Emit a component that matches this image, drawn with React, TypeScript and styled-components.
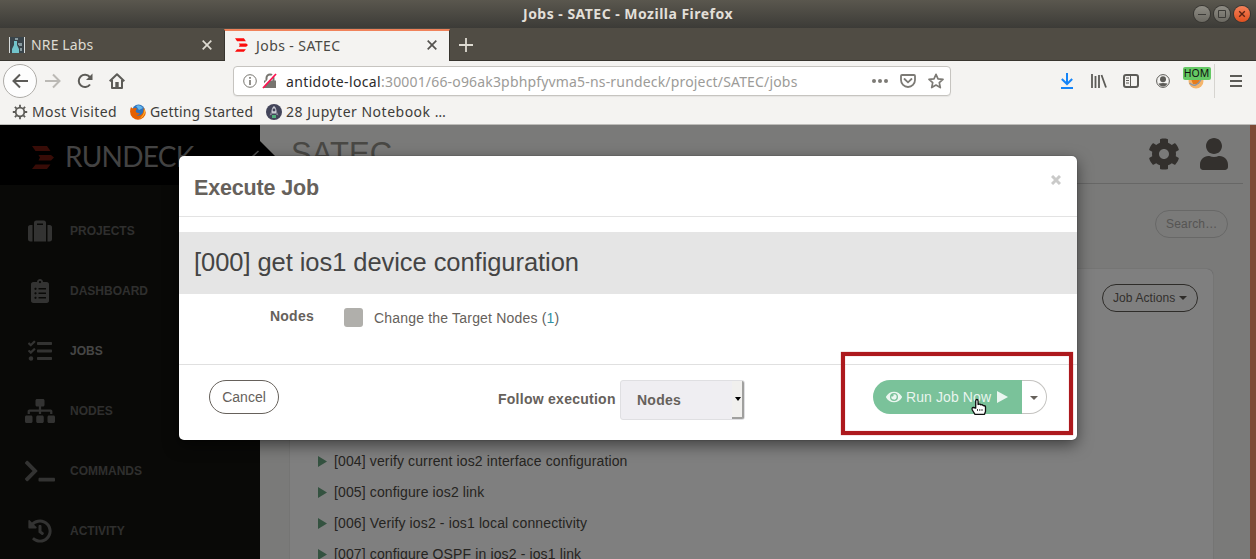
import React from "react";
import styled, { createGlobalStyle, css } from "styled-components";
import {
  FaSuitcase, FaClipboardList, FaTasks, FaSitemap, FaTerminal, FaHistory, FaCog, FaUser, FaEye,
} from "react-icons/fa";

const Global = createGlobalStyle`
  * { box-sizing: border-box; }
  html, body { margin: 0; padding: 0; }
  body { width: 1256px; height: 559px; overflow: hidden; background: #f4f3f1;
    font-family: "Liberation Sans", Arial, sans-serif; }
  svg { display: block; flex: none; }
`;

const Window = styled.div`
  position: relative;
  display: flex;
  flex-direction: column;
  width: 1256px;
  height: 559px;
  overflow: hidden;
`;

/* ---------- Browser chrome ---------- */
const chromeFont = css`font-family: "Noto Sans", "Open Sans", sans-serif;`;

const TitleBar = styled.header`
  ${chromeFont}
  display: grid;
  grid-template-columns: 1fr auto 1fr;
  align-items: center;
  flex: none;
  height: 28px;
  padding-right: 6px;
  background: linear-gradient(#5a574e, #3c3b37);
`;
const WindowTitle = styled.div`
  grid-column: 2;
  padding-left: 6px;
  margin-top: -1px;
  color: #e2dfd8;
  font-size: 14px;
  font-weight: 700;
  letter-spacing: 0.48px;
  white-space: nowrap;
`;
const WindowButtons = styled.div`
  display: flex;
  justify-content: flex-end;
  gap: 4px;
`;
const WindowButton = styled.span<{ $close?: boolean }>`
  display: flex;
  align-items: center;
  justify-content: center;
  width: 16px;
  height: 16px;
  border-radius: 50%;
  background: ${(p) => (p.$close ? "linear-gradient(#f58159, #e0501f)" : "linear-gradient(#8e8c84, #6b6962)")};
  box-shadow: 0 0 0 1px #373632;
`;

const TabStrip = styled.div`
  ${chromeFont}
  display: flex;
  flex: none;
  height: 33px;
  background: #504c44;
  box-shadow: inset 0 -1px #38352f;
`;
const Tab = styled.div<{ $active?: boolean }>`
  display: flex;
  align-items: center;
  width: ${(p) => (p.$active ? 226 : 224)}px;
  padding: ${(p) => (p.$active ? "0 12px 2px 10px" : "0 12px 0 9px")};
  border-top: ${(p) => (p.$active ? "2px solid #f0825a" : "0")};
  border-left: ${(p) => (p.$active ? "1px solid #38352f" : "0")};
  border-right: ${(p) => (p.$active ? "1px solid #38352f" : "0")};
  margin-top: ${(p) => (p.$active ? 1 : 0)}px;
  background: ${(p) => (p.$active ? "#f4f3f1" : "transparent")};
  color: ${(p) => (p.$active ? "#4a4843" : "#dedbd2")};
  font-size: 14px;
`;
const TabTitle = styled.span<{ $gap: number; $track: number }>`
  flex: 1;
  margin-left: ${(p) => p.$gap}px;
  letter-spacing: ${(p) => p.$track}px;
  white-space: nowrap;
`;
const NewTab = styled.div`
  display: flex;
  align-items: center;
  padding-left: 9px;
`;

const NavBar = styled.div`
  display: flex;
  align-items: center;
  flex: none;
  height: 40px;
  padding-left: 3px;
  background: #f4f3f1;
`;
const BackButton = styled.div`
  display: flex;
  align-items: center;
  justify-content: center;
  flex: none;
  width: 34px;
  height: 34px;
  border: 1px solid #aeaca8;
  border-radius: 50%;
  background: #fdfdfd;
`;
const NavIcons = styled.div`
  display: flex;
  align-items: center;
  flex: none;
  gap: 16px;
  width: 196px;
  padding-left: 8px;
`;
const AddressBar = styled.div`
  ${chromeFont}
  display: flex;
  align-items: center;
  flex: none;
  width: 718px;
  height: 30px;
  padding: 0 6px 0 9px;
  border: 1px solid #c6c4c0;
  border-radius: 4px;
  background: #fff;
  box-shadow: 0 1px 1px rgba(0, 0, 0, 0.06);
`;
const Url = styled.div`
  flex: 1;
  margin-left: 9px;
  color: #9c9b98;
  font-size: 14px;
  letter-spacing: 0.17px;
  white-space: nowrap;
  b { color: #2b2b2b; font-weight: 400; letter-spacing: 0.36px; }
`;
const AddressIcons = styled.div`
  display: flex;
  align-items: center;
  gap: 12px;
`;
const ToolIcons = styled.div`
  display: grid;
  grid-template-columns: 32px 32px 32px 32px 35px 1px 41px;
  align-items: center;
  justify-items: center;
  height: 34px;
  padding-left: 100px;
`;
const Extension = styled.div`
  position: relative;
  width: 28px;
  height: 34px;
  padding: 9px 0 0 5px;
`;
const ExtensionBadge = styled.span`
  ${chromeFont}
  position: absolute;
  left: 0;
  top: 3px;
  width: 28px;
  height: 13px;
  border-radius: 2px;
  background: #64c864;
  color: #111;
  font-size: 10.5px;
  line-height: 13px;
  text-align: center;
`;
const Divider = styled.span`
  width: 1px;
  height: 34px;
  background: #d6d4d0;
`;

const Bookmarks = styled.div`
  ${chromeFont}
  display: flex;
  flex: none;
  height: 24px;
  padding: 0 0 2px 12px;
  border-bottom: 1px solid #bdbcb9;
  background: #f4f3f1;
  color: #3e3d3a;
  font-size: 14px;
`;
const Bookmark = styled.div<{ $width: number; $track: number }>`
  display: flex;
  align-items: center;
  gap: 4px;
  width: ${(p) => p.$width}px;
  letter-spacing: ${(p) => p.$track}px;
  white-space: nowrap;
`;

/* ---------- Page behind the dialog ---------- */
const Page = styled.div`
  position: relative;
  display: flex;
  flex: 1;
  min-height: 0;
  overflow: hidden;
  background: #f4f4f3;
`;
const Shade = styled.div`
  position: absolute;
  inset: 0;
  background: rgba(0, 0, 0, 0.5);
`;
const Sidebar = styled.nav`
  display: flex;
  flex-direction: column;
  flex: none;
  width: 260px;
  background: #13130f;
`;
const Brand = styled.div`
  position: relative;
  display: flex;
  align-items: center;
  gap: 11px;
  flex: none;
  height: 60px;
  padding: 4px 0 0 32px;
  background: #000;
`;
const BrandName = styled.span`
  margin-top: -3px;
  color: #868686;
  font-family: Lato, sans-serif;
  font-size: 28px;
  letter-spacing: -0.75px;
  white-space: nowrap;
`;
const BrandNotch = styled.span`
  position: absolute;
  left: 260px;
  top: 16px;
  width: 30px;
  height: 30px;
  background: #000;
  clip-path: polygon(0 0, 100% 100%, 0 100%);
`;
const Collapse = styled.span`
  position: absolute;
  left: 250px;
  top: 25px;
`;
const NavItem = styled.div<{ $active?: boolean }>`
  display: flex;
  align-items: center;
  flex: none;
  gap: 15px;
  height: 60px;
  padding-left: 25px;
  color: ${(p) => (p.$active ? "#8c8c8a" : "#5e5e5c")};
  font-size: 12px;
  font-weight: 700;
  &:nth-child(2) { margin-top: 16px; }
`;
const NavGlyph = styled.span<{ $wide?: boolean }>`
  display: flex;
  justify-content: center;
  width: 30px;
  color: #666664;
  svg { width: ${(p) => (p.$wide ? 30 : 24)}px; height: 24px; }
`;

const Main = styled.main`
  display: flex;
  flex-direction: column;
  width: 983px;
  margin-right: 7px;
`;
const PageHeader = styled.div`
  display: flex;
  flex: none;
  justify-content: space-between;
  height: 59px;
  padding: 0 13px 0 31px;
  border-bottom: 1px solid #cfcfcd;
  color: #929089;
`;
const ProjectName = styled.h1`
  margin: 11px 0 0;
  font-size: 31px;
  font-weight: 400;
  line-height: 36px;
`;
const HeaderActions = styled.div`
  display: flex;
  align-items: center;
  gap: 18px;
  color: #66615b;
`;
const SearchRow = styled.div`
  display: flex;
  justify-content: flex-end;
  flex: none;
  padding: 26px 15px 31px 0;
`;
const SearchPill = styled.div`
  width: 73px;
  height: 28px;
  padding-left: 10px;
  border: 1px solid #d0d0ce;
  border-radius: 14px;
  color: #acaaa6;
  font-size: 12px;
  letter-spacing: 0.2px;
  line-height: 26px;
`;
const Card = styled.section`
  flex: 1;
  width: 923px;
  margin-left: 30px;
  padding: 15px 15px 0 28px;
  border-radius: 6px 6px 0 0;
  background: #fff;
  box-shadow: 0 0 1px rgba(0, 0, 0, 0.4);
`;
const JobActions = styled.div`
  display: flex;
  align-items: center;
  gap: 4px;
  width: 96px;
  height: 28px;
  margin: 0 0 133px auto;
  padding-left: 10px;
  border: 1px solid #5c5852;
  border-radius: 14px;
  color: #66615b;
  font-size: 12px;
  letter-spacing: 0.1px;
  white-space: nowrap;
`;
const Caret = styled.span<{ $color: string }>`
  width: 0;
  height: 0;
  border: 4px solid transparent;
  border-top-color: ${(p) => p.$color};
  border-bottom: 0;
`;
const JobRow = styled.div`
  display: flex;
  align-items: center;
  gap: 6px;
  height: 31px;
  color: #4c4943;
  font-size: 14px;
  letter-spacing: 0.13px;
  svg { margin: 2px 1px 0 -1px; }
`;
const EdgeStrip = styled.div`
  flex: 1;
  background: #f8946a;
`;

/* ---------- Dialog ---------- */
const Dialog = styled.div`
  position: absolute;
  left: 179px;
  top: 31px;
  display: flex;
  flex-direction: column;
  width: 898px;
  height: 284px;
  border-radius: 5px;
  background: #fff;
  box-shadow: 0 0 1px rgba(0, 0, 0, 0.7), 0 5px 15px rgba(0, 0, 0, 0.5);
  color: #66615b;
`;
const DialogHeader = styled.div`
  display: flex;
  justify-content: space-between;
  height: 61px;
  padding: 19px 16px 0 15px;
  border-bottom: 1px solid #e3e3e3;
`;
const DialogTitle = styled.h2`
  margin: 0;
  font-size: 21.5px;
  letter-spacing: -0.15px;
  line-height: 26px;
`;
const JobBanner = styled.div`
  height: 62px;
  margin-top: 15px;
  padding-left: 15px;
  background: #e5e5e5;
  color: #444;
  font-size: 25.5px;
  letter-spacing: -0.06px;
  line-height: 61px;
`;
const TargetRow = styled.div`
  display: flex;
  align-items: flex-start;
  height: 71px;
  padding-top: 13px;
  border-bottom: 1px solid #e0e0e0;
  font-size: 14px;
  line-height: 20px;
`;
const TargetLabel = styled.span`
  width: 135px;
  margin: -1px 30px 0 0;
  text-align: right;
  font-weight: 700;
  letter-spacing: 0.25px;
`;
const Checkbox = styled.span`
  width: 19px;
  height: 19px;
  margin-top: 1px;
  border-radius: 3px;
  background: #b0afab;
`;
const TargetText = styled.span`
  padding: 1px 0 0 11px;
  letter-spacing: 0.19px;
  i { color: #3091a4; font-style: normal; }
`;
const DialogFooter = styled.div`
  display: flex;
  flex: 1;
  padding: 15px 30px 0;
  font-size: 14px;
`;
const CancelButton = styled.div`
  width: 70px;
  height: 34px;
  border: 1px solid #66615b;
  border-radius: 17px;
  line-height: 32px;
  text-align: center;
`;
const FollowGroup = styled.div`
  display: flex;
  margin-left: 219px;
  font-weight: 700;
  letter-spacing: 0.26px;
`;
const FollowLabel = styled.span`
  width: 122px;
  line-height: 38px;
`;
const SelectBox = styled.div`
  display: flex;
  justify-content: space-between;
  width: 125px;
  height: 40px;
  padding-left: 16px;
  border: 1px solid #dfdfe2;
  border-radius: 3px;
  background: #efeef2;
  line-height: 38px;
`;
const SelectArrow = styled.span`
  display: flex;
  align-items: center;
  justify-content: flex-end;
  width: 12px;
  padding-right: 1px;
  border-right: 2px solid #a0a09e;
  border-bottom: 2px solid #a0a09e;
  border-radius: 0 2px 2px 0;
  background: #f1f0ee;
`;
const SelectCaret = styled(Caret)`
  border-width: 4px 3px 0;
`;
const RunGroup = styled.div`
  display: flex;
  margin-left: auto;
`;
const RunButton = styled.div`
  display: flex;
  align-items: center;
  width: 149px;
  height: 34px;
  padding-left: 13px;
  border-radius: 17px 0 0 17px;
  background: #7ac29a;
  color: rgba(255, 255, 255, 0.85);
  letter-spacing: 0.1px;
  white-space: nowrap;
  span { margin: 0 6px 0 4px; }
`;
const RunMenu = styled.div`
  display: flex;
  align-items: center;
  justify-content: center;
  width: 25px;
  height: 34px;
  padding-top: 1px;
  border: 1px solid #c4c3c0;
  border-left: 0;
  border-radius: 0 17px 17px 0;
`;
const Highlight = styled.div`
  position: absolute;
  left: 841px;
  top: 352px;
  width: 232px;
  height: 83px;
  border: 4px solid #ad191d;
  box-shadow: 0 0 1px rgba(173, 25, 29, 0.7), inset 0 0 1px rgba(173, 25, 29, 0.7);
`;
const Pointer = styled.div`
  position: absolute;
  left: 970px;
  top: 398px;
`;

type GlyphProps = { w: number; h?: number; color?: string; sw?: number; children: React.ReactNode };
const Glyph = ({ w, h = w, color = "#5c5b57", sw = 2, children }: GlyphProps) => (
  <svg width={w} height={h} viewBox={`0 0 ${w} ${h}`} fill="none" stroke={color} strokeWidth={sw}>{children}</svg>
);

const RundeckMark = ({ w, h, color }: { w: number; h: number; color: string }) => (
  <svg width={w} height={h} viewBox="0 0 22 23" fill={color}>
    <path d="M0 0h15l3.500 5h-15zM6.500 9h12.500l3 2.500-3 3h-12.500l1.500-3zM3.500 18.500h15l-3.500 4.500h-15z" />
  </svg>
);

const CloseGlyph = ({ color }: { color: string }) => (
  <Glyph w={10} color={color} sw={1.7}><path d="M.7.7l8.600 8.600M9.300.7L.7 9.300" /></Glyph>
);

const NAV = [
  { label: "PROJECTS", Icon: FaSuitcase },
  { label: "DASHBOARD", Icon: FaClipboardList },
  { label: "JOBS", Icon: FaTasks, active: true },
  { label: "NODES", Icon: FaSitemap, wide: true },
  { label: "COMMANDS", Icon: FaTerminal, wide: true },
  { label: "ACTIVITY", Icon: FaHistory },
];

const JOBS = [
  "[004] verify current ios2 interface configuration",
  "[005] configure ios2 link",
  "[006] Verify ios2 - ios1 local connectivity",
  "[007] configure OSPF in ios2 - ios1 link",
];

const BrowserChrome = () => (
  <>
    <TitleBar>
      <WindowTitle>Jobs - SATEC - Mozilla Firefox</WindowTitle>
      <WindowButtons>
        <WindowButton><Glyph w={8} color="#3c3b37" sw={1}><path d="M0 4.500h8" /></Glyph></WindowButton>
        <WindowButton><Glyph w={8} color="#3c3b37" sw={1}><path d="M.5.5h7v7h-7z" /></Glyph></WindowButton>
        <WindowButton $close><Glyph w={8} color="#5a2413" sw={1.4}><path d="M1.200 1.200l5.600 5.600M6.800 1.200L1.200 6.800" /></Glyph></WindowButton>
      </WindowButtons>
    </TitleBar>
    <TabStrip>
      <Tab>
        <svg width="16" height="16" viewBox="0 0 16 16">
          <path fill="#39444a" d="M0 0h16v16H0z" />
          <path fill="#d8dcdc" d="M0 0h1v16H0zM15 0h1v16h-1z" />
          <path fill="#72c4cb" d="M5 4h3v4l2 4v4H3v-4l2-4z" />
          <path fill="#87999e" d="M6 1h3v2H6zM9 6h4v3h-3v-1H9zM11 11h2v3h-2z" />
        </svg>
        <TabTitle $gap={6} $track={0.15}>NRE Labs</TabTitle>
        <CloseGlyph color="#dedbd2" />
      </Tab>
      <Tab $active>
        <RundeckMark w={13} h={14} color="#fb0d0d" />
        <TabTitle $gap={8} $track={0.42}>Jobs - SATEC</TabTitle>
        <CloseGlyph color="#55534f" />
      </Tab>
      <NewTab><Glyph w={14} color="#dedbd2" sw={1.8}><path d="M7 0v14M0 7h14" /></Glyph></NewTab>
    </TabStrip>
    <NavBar>
      <BackButton><Glyph w={16}><path d="M16 8H1.500M8 1.500L1.500 8 8 14.500" /></Glyph></BackButton>
      <NavIcons>
        <Glyph w={16} color="#bbb9b5"><path d="M0 8h14.500M8 1.500L14.500 8 8 14.500" /></Glyph>
        <Glyph w={16}>
          <path d="M13 11.500A6.200 6.200 0 1 1 12.800 4" />
          <path d="M15.500.500v6.500h-6.500z" fill="#5c5b57" stroke="none" />
        </Glyph>
        <Glyph w={16}>
          <path d="M.700 8.300L8 1.200l7.300 7.100M3 7v8h10V7" strokeLinejoin="round" />
          <path d="M6.300 9h3.400v6H6.300z" fill="#5c5b57" stroke="none" />
        </Glyph>
      </NavIcons>
      <AddressBar>
        <Glyph w={14} color="#77756f" sw={1}>
          <circle cx="7" cy="7" r="6.300" />
          <path d="M7 6v5M7 3v1.700" strokeWidth="1.600" />
        </Glyph>
        <Glyph w={20} h={16} color="#77756f">
          <path d="M9.500 8V5a3.500 3.500 0 0 1 7 0v3" />
          <path d="M7 7.500h12v7.500H7z" fill="#77756f" stroke="none" />
          <path d="M5.500 13.500L17.500 1" stroke="#fff" strokeWidth="2.500" />
          <path d="M6 15L19 1" stroke="#ff1250" strokeWidth="1.800" />
        </Glyph>
        <Url><b>antidote-local</b>:30001/66-o96ak3pbhpfyvma5-ns-rundeck/project/SATEC/jobs</Url>
        <AddressIcons>
          <svg width="16" height="4" viewBox="0 0 16 4" fill="#7c7a75"><circle cx="2" cy="2" r="2" /><circle cx="8" cy="2" r="2" /><circle cx="14" cy="2" r="2" /></svg>
          <Glyph w={16} h={14} color="#7c7a75" sw={1.8}>
            <path d="M2 1h12q1 0 1 1v4a7 7 0 0 1-14 0V2q0-1 1-1z" /><path d="M4.500 5L8 8.300 11.500 5" strokeLinecap="round" />
          </Glyph>
          <Glyph w={16} color="#7c7a75" sw={1.7}>
            <path strokeLinejoin="round" d="M8 1.300l2 4.500 5 .500-3.700 3.300 1 5L8 12.100l-4.300 2.500 1-5L1 6.300l5-.500z" />
          </Glyph>
        </AddressIcons>
      </AddressBar>
      <ToolIcons>
        <Glyph w={14} h={16} color="#1484f8"><path d="M7 0v11M1.800 6L7 11l5.200-5M1 15h12" /></Glyph>
        <Glyph w={16} h={14}><path d="M1 0v14M4.500 2v12M8 1v13M10.500 1l4.500 12.500" strokeWidth="1.800" /></Glyph>
        <Glyph w={16} h={14}>
          <rect x="1" y="1" width="14" height="12" rx="2" /><path d="M7.500 1v12" strokeWidth="1" /><path d="M3 4h3M3 6.500h3M3 9h3" strokeWidth="1" />
        </Glyph>
        <Glyph w={14} sw={1}>
          <circle cx="7" cy="7" r="6.400" />
          <g fill="#5c5b57" stroke="none"><circle cx="7" cy="5.200" r="3" /><path d="M2.500 9.500q4.500-1 9 0-1.500 3-4.500 3t-4.500-3z" /></g>
        </Glyph>
        <Extension>
          <svg width="16" height="16" viewBox="0 0 16 16">
            <circle cx="8" cy="8" r="7.500" fill="#f5b56b" /><path fill="#e67c1c" d="M3 6h9l-1 5H5z" />
            <path d="M1.500 10q6 6 12-4" fill="none" stroke="#8d96a6" strokeWidth="1.400" />
          </svg>
          <ExtensionBadge>HOM</ExtensionBadge>
        </Extension>
        <Divider />
        <Glyph w={12}><path d="M0 1h12M0 6h12M0 11h12" strokeWidth="1.800" /></Glyph>
      </ToolIcons>
    </NavBar>
    <Bookmarks>
      <Bookmark $width={118} $track={0.38}>
        <Glyph w={16} sw={1.8}>
          <circle cx="8" cy="8" r="4.300" />
          <path d="M8 .8v2.500M8 12.700v2.500M.8 8h2.500M12.700 8h2.500M2.900 2.900l1.700 1.700M11.400 11.400l1.700 1.700M2.900 13.100l1.700-1.700M11.400 4.600l1.700-1.700" />
        </Glyph>
        Most Visited
      </Bookmark>
      <Bookmark $width={136} $track={0.17}>
        <svg width="16" height="16" viewBox="0 0 16 16">
          <circle cx="8.500" cy="7" r="6.500" fill="#2f73bd" />
          <path fill="#63b5ea" d="M6 2q4-2 7 2l-4 2z" />
          <path fill="#e66000" d="M1 3l1.500 1.500Q5 3.500 7 4.500L5.500 7q.5 2 2.500 2l2 .5q-1.500 2-4 1.200Q9 13 12 10q2-2.500 1.500-6.500Q18 9 13.500 13.500 8 18 2.500 13.500-1.500 9 1 3z" />
          <path fill="#ffb52e" d="M14 4q2.500 5-1 8.500-2 2-5 2.500 7-3 6-11z" />
        </svg>
        Getting Started
      </Bookmark>
      <Bookmark $width={190} $track={0.5}>
        <svg width="16" height="16" viewBox="0 0 16 16">
          <circle cx="8" cy="8" r="8" fill="#43455a" />
          <path fill="#c9cbd3" d="M8 2q3 2 2.500 7.500h-5Q5 4 8 2z" /><circle cx="8" cy="6" r="1.400" fill="#43455a" />
          <path fill="#8a8d9b" d="M5 8l-1.500 3.500L6 10.500zM11 8l1.500 3.500-2.500-1z" /><path fill="#4fae7b" d="M6 11h4v3H6z" />
        </svg>
        28 Jupyter Notebook …
      </Bookmark>
    </Bookmarks>
  </>
);

const ExecuteDialog = () => (
  <Dialog role="dialog">
    <DialogHeader>
      <DialogTitle>Execute Job</DialogTitle>
      <Glyph w={10} color="#cacac9" sw={3}><path d="M1 1l8 8M9 1L1 9" /></Glyph>
    </DialogHeader>
    <JobBanner>[000] get ios1 device configuration</JobBanner>
    <TargetRow>
      <TargetLabel>Nodes</TargetLabel>
      <Checkbox />
      <TargetText>Change the Target Nodes (<i>1</i>)</TargetText>
    </TargetRow>
    <DialogFooter>
      <CancelButton>Cancel</CancelButton>
      <FollowGroup>
        <FollowLabel>Follow execution</FollowLabel>
        <SelectBox>Nodes<SelectArrow><SelectCaret $color="#000" /></SelectArrow></SelectBox>
      </FollowGroup>
      <RunGroup>
        <RunButton>
          <FaEye size={16} /><span>Run Job Now</span>
          <svg width="11" height="12" viewBox="0 0 11 12" fill="currentColor"><path d="M0 0l11 6-11 6z" /></svg>
        </RunButton>
        <RunMenu><Caret $color="#66615b" /></RunMenu>
      </RunGroup>
    </DialogFooter>
  </Dialog>
);

export default function App() {
  return (
    <Window>
      <Global />
      <BrowserChrome />
      <Page>
        <Sidebar>
          <Brand>
            <RundeckMark w={22} h={23} color="#70180e" />
            <BrandName>RUNDECK</BrandName>
            <BrandNotch />
            <Collapse><Glyph w={10} h={12} color="#999" sw={1.6}><path d="M8.500 1L2 7l6.500 6" /></Glyph></Collapse>
          </Brand>
          {NAV.map(({ label, Icon, active, wide }) => (
            <NavItem key={label} $active={active}><NavGlyph $wide={wide}><Icon /></NavGlyph>{label}</NavItem>
          ))}
        </Sidebar>
        <Main>
          <PageHeader>
            <ProjectName>SATEC</ProjectName>
            <HeaderActions><FaCog size={32} /><FaUser size={32} /></HeaderActions>
          </PageHeader>
          <SearchRow><SearchPill>Search…</SearchPill></SearchRow>
          <Card>
            <JobActions>Job Actions<Caret $color="#5c5852" /></JobActions>
            {JOBS.map((job) => (
              <JobRow key={job}>
                <svg width="10" height="11" viewBox="0 0 10 11" fill="#68a480"><path d="M1 0l9 5.500L1 11z" /></svg>
                {job}
              </JobRow>
            ))}
          </Card>
        </Main>
        <EdgeStrip />
        <Shade />
        <ExecuteDialog />
      </Page>
      <Highlight />
      <Pointer>
        <svg width="18" height="18" viewBox="0 0 18 18" fill="#fff" stroke="#111" strokeWidth="1.300" strokeLinejoin="round">
          <path d="M5.700 10V3q0-1.500 1.200-1.500T8.100 3v3.500q2.300-.8 2.600.3 2-.4 2.400.7 2.400 0 2.400 1.500v4.500l-1 2.800H5L2.300 12q-.8-2.500 1-2.500z" />
          <path d="M7.500 11v2M9.800 11v2M12 11v2" strokeWidth=".8" />
        </svg>
      </Pointer>
    </Window>
  );
}
